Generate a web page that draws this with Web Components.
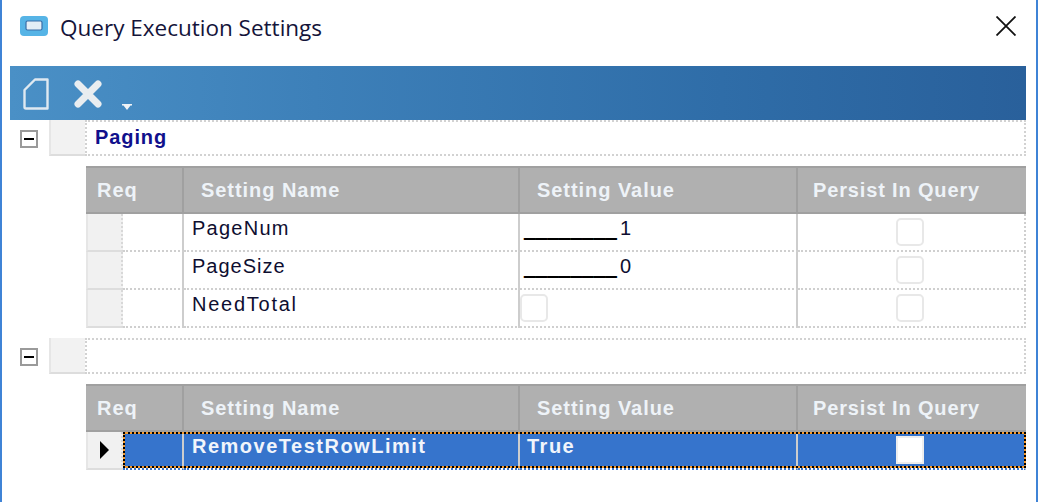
<!DOCTYPE html>
<html>
<head>
<meta charset="utf-8">
<title>Query Execution Settings</title>
<style>
html,body{margin:0;padding:0;background:#fff;}
.mask{font-size:20.9px;font-weight:bold;color:#000;letter-spacing:0;margin-right:3px;vertical-align:-1px;text-shadow:0 .7px 0 #000;}
.tight{letter-spacing:1.25px;}
.wide{letter-spacing:1.75px;}
.true{padding-left:3px;}
</style>
</head>
<body>
<qes-window>
  <qes-titlebar slot="title">Query Execution Settings</qes-titlebar>
  <qes-toolbar></qes-toolbar>
  <qes-group label="Paging">
    <qes-grid>
      <qes-row><span class="tight">PageNum</span><span slot="value"><span class="mask">________</span>1</span><qes-check slot="persist"></qes-check></qes-row>
      <qes-row><span>PageSize</span><span slot="value"><span class="mask">________</span>0</span><qes-check slot="persist"></qes-check></qes-row>
      <qes-row><span class="wide">NeedTotal</span><qes-check slot="value" left></qes-check><qes-check slot="persist"></qes-check></qes-row>
    </qes-grid>
  </qes-group>
  <qes-group>
    <qes-grid>
      <qes-row selected><span>RemoveTestRowLimit</span><span slot="value" class="true">True</span><qes-check slot="persist" solid></qes-check></qes-row>
    </qes-grid>
  </qes-group>
</qes-window>

<script>
// small helper so every element does the same thing in its constructor
class ShadowEl extends HTMLElement{
    constructor(){
        super();
        this.attachShadow({mode:'open'});
    }
    connectedCallback(){
        this.shadowRoot.innerHTML=this.render();
    }
}

class QesWindow extends ShadowEl{
    render(){
        return `
        <style>
        :host{display:flex;flex-direction:column;box-sizing:border-box;width:1038px;height:502px;
            border-left:2px solid #3f83d6;border-right:2px solid #3f83d6;background:#fff;overflow:hidden;}
        .body{display:flex;flex-direction:column;padding:0 10px 0 8px;}
        </style>
        <slot name="title"></slot>
        <div class="body"><slot></slot></div>`;
    }
}

class QesTitlebar extends ShadowEl{
    render(){
        return `
        <style>
        :host{display:flex;align-items:center;height:66px;padding:0 20px 14px 18px;box-sizing:border-box;
            font:22.5px "Open Sans",sans-serif;color:#14143a;}
        .text{margin:2px 0 0 12px;flex:1;white-space:nowrap;}
        svg{display:block;}
        </style>
        <svg width="28" height="20" viewBox="0 0 28 20">
            <rect width="28" height="20" rx="4" fill="#56b4e6"/>
            <rect x="6" y="5" width="16" height="9" rx="1.5" fill="#e4eef6" stroke="#3a6ea8" stroke-width="1.2"/>
        </svg>
        <span class="text"><slot></slot></span>
        <svg width="20" height="20" viewBox="0 0 20 20"><path d="M0.5 0.5L19.5 19.5M19.5 0.5L0.5 19.5" stroke="#111" stroke-width="1.8" fill="none"/></svg>`;
    }
}

class QesToolbar extends ShadowEl{
    render(){
        return `
        <style>
        :host{display:flex;align-items:flex-start;height:54px;box-sizing:border-box;padding:12px 0 0 13px;
            background:linear-gradient(90deg,#4a90c6 0%,#3d80b9 30%,#2f6da8 70%,#29609b 100%);}
        svg{display:block;}
        .del{margin-left:25px;margin-top:2px;}
        .drop{margin-left:20px;margin-top:26px;}
        </style>
        <svg width="26" height="32" viewBox="0 0 26 32">
            <path d="M12 1.500H24.500V30.500H3Q1.500 30.500 1.500 29V12Z" fill="none" stroke="#dfe9f1" stroke-width="2.4" stroke-linejoin="round"/>
        </svg>
        <svg class="del" width="28" height="28" viewBox="0 0 28 28">
            <path d="M4 4L24 24M24 4L4 24" stroke="#e9edf0" stroke-width="7" stroke-linecap="round"/>
        </svg>
        <svg class="drop" width="10" height="6" viewBox="0 0 10 6">
            <path d="M0 0H10V1.500H8.500L5 6L1.500 1.500H0Z" fill="#f0f3f6"/>
        </svg>`;
    }
}

class QesGroup extends ShadowEl{
    render(){
        return `
        <style>
        :host{display:block;margin-bottom:10px;}
        .head{display:flex;height:36px;align-items:stretch;}
        .toggle{width:39px;display:flex;align-items:center;padding:2px 0 0 10px;box-sizing:border-box;}
        .box{width:18px;height:18px;box-sizing:border-box;border:2px solid #9a9a9a;display:flex;align-items:center;justify-content:center;}
        .box i{display:block;width:10px;height:2px;background:#000;}
        .sel{width:36px;background:#f2f2f2;border-bottom:2px solid #ddd;border-left:2px solid #e6e6e6;box-sizing:border-box;}
        .label{flex:1;box-sizing:border-box;padding:2px 0 0 8px;border:2px dotted #d2d2d2;
            font:bold 20px/26px "Liberation Sans",sans-serif;letter-spacing:.9px;color:#10108c;}
        .grid{margin:10px 0 0 76px;}
        </style>
        <div class="head">
            <div class="toggle"><div class="box"><i></i></div></div>
            <div class="sel"></div>
            <div class="label">${this.getAttribute('label')||''}</div>
        </div>
        <div class="grid"><slot></slot></div>`;
    }
}

class QesGrid extends ShadowEl{
    render(){
        return `
        <style>
        :host{display:block;--cols:98px 336px 278px 228px;}
        .hdr{display:grid;grid-template-columns:var(--cols);height:48px;box-sizing:border-box;background:#b0b0b0;
            border-top:2px solid #a0a0a0;border-bottom:2px solid #a0a0a0;
            font:bold 20px/44px "Liberation Sans",sans-serif;letter-spacing:1px;color:#eef3f8;}
        .hdr div{box-sizing:border-box;border-right:2px solid #a0a0a0;white-space:nowrap;}
        .hdr div:last-child{border-right:0;}
        .hdr .req{padding-left:11px;}
        .hdr .nm{padding-left:17px;letter-spacing:.95px;}
        .hdr .vl{padding-left:17px;letter-spacing:.95px;}
        .hdr .ps{padding-left:15px;letter-spacing:.85px;}
        </style>
        <div class="hdr">
            <div class="req">Req</div>
            <div class="nm">Setting Name</div>
            <div class="vl">Setting Value</div>
            <div class="ps">Persist In Query</div>
        </div>
        <slot></slot>`;
    }
}

class QesRow extends ShadowEl{
    render(){
        return `
        <style>
        :host{display:grid;grid-template-columns:37px 61px 336px 278px 228px;height:38px;
            font:20px/28px "Liberation Sans",sans-serif;letter-spacing:1px;color:#0e0e30;position:relative;}
        .c{box-sizing:border-box;border-bottom:2px dotted #cfcfcf;white-space:nowrap;overflow:hidden;}
        .sel{background:#f1f1f1;border-bottom:2px solid #ddd;border-right:2px dotted #d8d8d8;border-left:2px solid #e6e6e6;
            display:flex;align-items:center;padding-left:12px;}
        .req,.name,.val{border-right:2px solid #cdcdcd;}
        .name{padding-left:8px;}
        .val{padding-left:4px;}
        .per{display:flex;justify-content:center;padding-right:2px;border-right:2px dotted #cfcfcf;}
        .arrow{display:none;width:0;height:0;border-left:9px solid #000;border-top:9px solid transparent;border-bottom:9px solid transparent;}
        :host([selected]) .arrow{display:block;}
        :host([selected]) .c:not(.sel){background:#3674cc;background-clip:padding-box;color:#f1f5fb;border-bottom-color:#3674cc;}
        :host([selected]) .name,:host([selected]) .val{font-weight:bold;letter-spacing:1.5px;}
        :host([selected]) .focus{display:block;}
        .focus{display:none;position:absolute;left:37px;right:0;top:0;bottom:2px;border:2px dotted #000;pointer-events:none;
            background:
              linear-gradient(#f59a2e,#f59a2e) top/100% 2px no-repeat,
              linear-gradient(#f59a2e,#f59a2e) bottom/100% 2px no-repeat,
              linear-gradient(#f59a2e,#f59a2e) left/2px 100% no-repeat,
              linear-gradient(#f59a2e,#f59a2e) right/2px 100% no-repeat;
            background-origin:border-box;background-clip:border-box;}
        </style>
        <div class="c sel"><i class="arrow"></i></div>
        <div class="c req"></div>
        <div class="c name"><slot></slot></div>
        <div class="c val"><slot name="value"></slot></div>
        <div class="c per"><slot name="persist"></slot></div>
        <div class="focus"></div>`;
    }
}

class QesCheck extends ShadowEl{
    render(){
        return `
        <style>
        :host{display:block;width:28px;height:28px;box-sizing:border-box;margin-top:4px;
            border:2px solid #e8e8e8;border-radius:5px;background:#fff;}
        :host([left]){margin-left:-4px;}
        :host([solid]){border-radius:0;border-color:#eeeeee;}
        </style>`;
    }
}

customElements.define('qes-window',QesWindow);
customElements.define('qes-titlebar',QesTitlebar);
customElements.define('qes-toolbar',QesToolbar);
customElements.define('qes-group',QesGroup);
customElements.define('qes-grid',QesGrid);
customElements.define('qes-row',QesRow);
customElements.define('qes-check',QesCheck);
</script>
</body>
</html>
